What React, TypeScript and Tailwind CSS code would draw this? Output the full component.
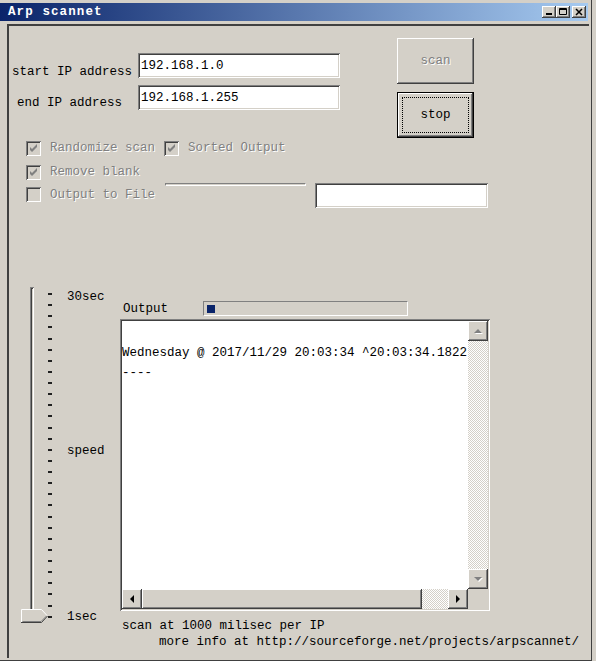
import React from "react";

const raised =
  "shadow-[inset_-1px_-1px_#404040,inset_1px_1px_#ffffff,inset_-2px_-2px_#808080,inset_2px_2px_#d4d0c8]";
const sunken =
  "shadow-[inset_1px_1px_#808080,inset_-1px_-1px_#ffffff,inset_2px_2px_#404040,inset_-2px_-2px_#d4d0c8]";
const dither =
  "[background-image:repeating-conic-gradient(#d4d0c8_0%_25%,#ffffff_0%_50%)] [background-size:2px_2px]";
const disabledText = "text-[#808080] [text-shadow:1px_1px_0_#ffffff]";

function CaptionButton({ kind }: { kind: "min" | "max" | "close" }) {
  return (
    <div className={`w-[14px] h-[12px] bg-[#d4d0c8] ${raised} flex items-center justify-center`}>
      <svg width="14" height="12" viewBox="0 0 14 12">
        {kind === "min" && <rect x="4" y="7" width="6" height="2" fill="#000" />}
        {kind === "max" && (
          <path d="M3.5 2.5h7v6h-7z M3.5 3.5h7" stroke="#000" fill="none" />
        )}
        {kind === "close" && (
          <path d="M4 3l6 6M10 3l-6 6" stroke="#000" strokeWidth="1.5" />
        )}
      </svg>
    </div>
  );
}

function CheckBox({ checked }: { checked: boolean }) {
  return (
    <div
      className={`w-[15px] h-[15px] shrink-0 bg-[#d4d0c8] ${sunken} flex items-center justify-center`}
    >
      {checked && (
        <svg width="9" height="9" viewBox="0 0 9 9">
          <polygon points="0,3 2,5 7,0 7,3 2,8 0,6" fill="#808080" transform="translate(1,0)" />
        </svg>
      )}
    </div>
  );
}

function Arrow({ dir, disabled }: { dir: "up" | "down" | "left" | "right"; disabled?: boolean }) {
  const pts = {
    up: "6,7 10,3 14,7",
    down: "6,3 10,7 14,3",
    left: "7,6 3,10 7,14",
    right: "3,6 7,10 3,14",
  }[dir];
  const vertical = dir === "up" || dir === "down";
  return (
    <div className={`w-[20px] h-[20px] shrink-0 bg-[#d4d0c8] ${raised} flex items-center justify-center`}>
      <svg width={vertical ? 20 : 10} height={vertical ? 10 : 20} viewBox={vertical ? "0 0 20 10" : "0 0 10 20"}>
        {disabled && <polygon points={pts} fill="#ffffff" transform="translate(1,1)" />}
        <polygon points={pts} fill={disabled ? "#808080" : "#000000"} />
      </svg>
    </div>
  );
}

export default function App() {
  const ticks = Array.from({ length: 30 }, (_, i) => i);

  return (
    <div className="w-[596px] h-[661px] bg-[#d4d0c8] overflow-hidden font-['Liberation_Mono',monospace] text-[12.5px] leading-[14px] text-black">
      <div className="w-[592px] h-[661px] flex flex-col border-r border-b border-[#404040]">
        {/* caption */}
        <div className="mt-[3px] h-[18px] w-[588px] flex items-center pl-[8px] pr-[2px] bg-[linear-gradient(to_right,#0a246a,#a6caf0)]">
          <span className="text-white font-bold tracking-[1.1px]">Arp scannet</span>
          <div className="ml-auto flex items-center">
            <CaptionButton kind="min" />
            <CaptionButton kind="max" />
            <div className="ml-[2px]">
              <CaptionButton kind="close" />
            </div>
          </div>
        </div>

        {/* client area */}
        <div className="ml-[7px] mt-[3px] w-[582px] h-[634px] border-l-2 border-t-2 border-l-[#404040] border-t-[#404040] flex flex-col">
          {/* addresses + buttons */}
          <div className="flex mt-[12px]">
            <div className="flex flex-col w-[334px] shrink-0">
              <div className="flex mt-[15px] h-[25px]">
                <div className="ml-[3px] w-[126px] pt-[12px]">start IP address</div>
                <div className={`w-[202px] h-[25px] bg-white ${sunken} flex items-center pl-[3px]`}>
                  192.168.1.0
                </div>
              </div>
              <div className="flex mt-[7px] h-[25px]">
                <div className="ml-[8px] w-[121px] pt-[11px]">end IP address</div>
                <div className={`w-[202px] h-[25px] bg-white ${sunken} flex items-center pl-[3px]`}>
                  192.168.1.255
                </div>
              </div>
            </div>
            <div className="ml-[54px] flex flex-col">
              <div className={`w-[77px] h-[46px] bg-[#d4d0c8] ${raised} flex items-center justify-center ${disabledText}`}>
                scan
              </div>
              <div className="mt-[8px] w-[77px] h-[46px] border border-black flex">
                <div className={`flex-1 flex ${raised}`}>
                  <div className="flex-1 m-[4px] border border-dotted border-black flex items-center justify-center">
                    stop
                  </div>
                </div>
              </div>
            </div>
          </div>

          {/* options */}
          <div className="flex items-center h-[16px] mt-[2px] pl-[17px]">
            <CheckBox checked />
            <span className={`ml-[9px] ${disabledText}`}>Randomize scan</span>
            <div className="ml-[9px]">
              <CheckBox checked />
            </div>
            <span className={`ml-[9px] ${disabledText}`}>Sorted Output</span>
          </div>
          <div className="flex items-center h-[16px] mt-[8px] pl-[17px]">
            <CheckBox checked />
            <span className={`ml-[9px] ${disabledText}`}>Remove blank</span>
          </div>
          <div className="flex items-start h-[25px] mt-[3px] pl-[17px]">
            <div className="mt-[4px] flex items-center">
              <CheckBox checked={false} />
              <span className={`ml-[9px] ${disabledText}`}>Output to File</span>
            </div>
            <div className="ml-[10px] w-[141px] h-[3px] border-t border-l border-t-[#808080] border-l-[#808080] border-b border-r border-b-white border-r-white" />
            <div className={`ml-[9px] w-[173px] h-[25px] bg-white ${sunken}`} />
          </div>

          {/* speed + output */}
          <div className="flex mt-[79px]">
            <div className="relative w-[111px] h-[335px] shrink-0 flex">
              <div className={`ml-[21px] w-[4px] h-[324px] ${sunken}`} />
              <div className="ml-[14px] mt-[6px] h-[325px] flex flex-col justify-between">
                {ticks.map((t) => (
                  <div key={t} className="w-[4px] h-[2px] bg-[#202020]" />
                ))}
              </div>
              <div className="ml-[15px] flex flex-col">
                <div className="mt-[3px]">30sec</div>
                <div className="mt-[140px]">speed</div>
                <div className="mt-[152px]">1sec</div>
              </div>
              <svg className="absolute left-[12px] top-[322px]" width="27" height="14" viewBox="0 0 27 14">
                <polygon points="0.5,0.5 20.5,0.5 26,6.5 20.5,13 0.5,13" fill="#d4d0c8" />
                <polyline points="0.5,13 0.5,0.5 20.5,0.5 26,6.5" stroke="#ffffff" fill="none" />
                <polyline points="0,13.5 20.5,13.5 26.5,7" stroke="#404040" fill="none" />
                <polyline points="1.5,12.5 20,12.5 25.5,7" stroke="#808080" fill="none" />
              </svg>
            </div>

            <div className="flex flex-col w-[370px] shrink-0">
              <div className="flex items-center h-[15px] mt-[14px]">
                <span className="ml-[3px] mt-[1px]">Output</span>
                <div className="ml-[35px] w-[205px] h-[15px] border border-t-[#808080] border-l-[#808080] border-b-white border-r-white flex items-center pl-[3px]">
                  <div className="w-[8px] h-[8px] bg-[#0a246a]" />
                </div>
              </div>

              <div className={`mt-[3px] w-[370px] h-[292px] p-[2px] bg-white ${sunken} flex flex-col`}>
                <div className="flex h-[268px]">
                  <div className="flex-1 overflow-hidden whitespace-nowrap pt-[25px]">
                    <div>Wednesday @ 2017/11/29 20:03:34 ^20:03:34.1822</div>
                    <div className="mt-[6px]">----</div>
                  </div>
                  <div className="w-[20px] flex flex-col">
                    <Arrow dir="up" disabled />
                    <div className={`flex-1 ${dither}`} />
                    <Arrow dir="down" disabled />
                  </div>
                </div>
                <div className="flex h-[20px]">
                  <Arrow dir="left" />
                  <div className={`w-[280px] h-[20px] bg-[#d4d0c8] ${raised}`} />
                  <div className={`w-[26px] h-[20px] ${dither}`} />
                  <Arrow dir="right" />
                  <div className="w-[20px] h-[20px] bg-[#d4d0c8]" />
                </div>
              </div>

              <div className="mt-[8px] ml-[2px] whitespace-nowrap">scan at 1000 milisec per IP</div>
              <div className="mt-[2px] ml-[39px] whitespace-nowrap">
                more info at http://sourceforge.net/projects/arpscannet/
              </div>
            </div>
          </div>
        </div>
      </div>
    </div>
  );
}
